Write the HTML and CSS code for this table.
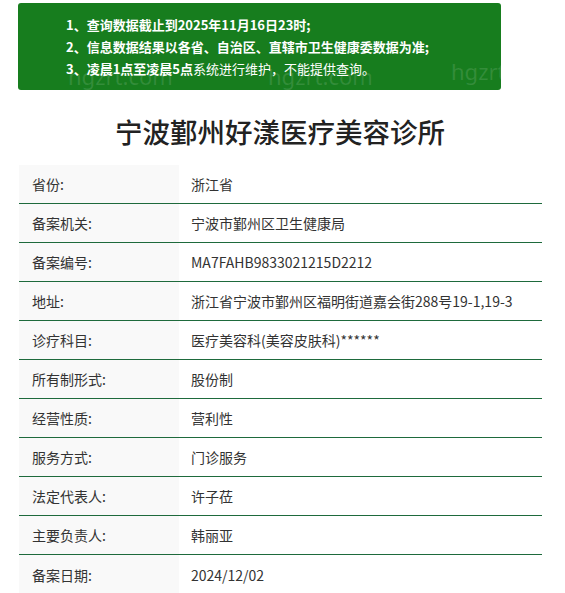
FILE: index.html
```html
<!DOCTYPE html>
<html lang="zh-CN">
<head>
<meta charset="utf-8">
<title>宁波鄞州好漾医疗美容诊所</title>
<link rel="stylesheet" href="styles.css">
</head>
<body>
<div class="page">
  <div class="notice">
    <p class="line b">1、查询数据截止到2025年11月16日23时;</p>
    <p class="line b">2、信息数据结果以各省、自治区、直辖市卫生健康委数据为准;</p>
    <p class="line"><b>3、凌晨1点至凌晨5点</b>系统进行维护，不能提供查询。</p>
    <span class="wm wm1">hgzrt.com</span>
    <span class="wm wm2">hgzrt.com</span>
    <span class="wm wm3">hgzrt.c</span>
  </div>
  <h1 class="title">宁波鄞州好漾医疗美容诊所</h1>
  <div class="table">
    <div class="row"><div class="k">省份:</div><div class="v">浙江省</div></div>
    <div class="row"><div class="k">备案机关:</div><div class="v">宁波市鄞州区卫生健康局</div></div>
    <div class="row"><div class="k">备案编号:</div><div class="v">MA7FAHB9833021215D2212</div></div>
    <div class="row"><div class="k">地址:</div><div class="v">浙江省宁波市鄞州区福明街道嘉会街288号19-1,19-3</div></div>
    <div class="row"><div class="k">诊疗科目:</div><div class="v">医疗美容科(美容皮肤科)******</div></div>
    <div class="row"><div class="k">所有制形式:</div><div class="v">股份制</div></div>
    <div class="row"><div class="k">经营性质:</div><div class="v">营利性</div></div>
    <div class="row"><div class="k">服务方式:</div><div class="v">门诊服务</div></div>
    <div class="row"><div class="k">法定代表人:</div><div class="v">许子莅</div></div>
    <div class="row"><div class="k">主要负责人:</div><div class="v">韩丽亚</div></div>
    <div class="row"><div class="k">备案日期:</div><div class="v">2024/12/02</div></div>
  </div>
</div>
</body>
</html>
```
FILE: styles.css
```css
* { box-sizing: border-box; }
html, body { margin: 0; padding: 0; background: #fff; }
body {
  font-family: "Noto Sans CJK SC", "Noto Sans", sans-serif;
  color: #333;
  overflow: hidden;
}
.page {
  width: 565px;
  padding: 3px 0 0 18px;
}
.notice {
  position: relative;
  overflow: hidden;
  width: 483px;
  height: 87px;
  background: #177d1e;
  border-radius: 3px;
  padding: 11px 0 0 48px;
  color: #fff;
}
.line {
  margin: 0;
  font-size: 13px;
  line-height: 22px;
  white-space: nowrap;
  position: relative;
  z-index: 1;
}
.line.b, .line b { font-weight: 700; }
.wm {
  position: absolute;
  font-family: "Noto Sans", sans-serif;
  font-size: 22px;
  line-height: 26px;
  color: rgba(255,255,255,0.12);
  white-space: nowrap;
}
.wm1 { left: 50px; top: 60px; }
.wm2 { left: 250px; top: 60px; }
.wm3 { left: 433px; top: 55px; }
.title {
  margin: 0;
  width: 524px;
  padding: 22px 0 15px;
  text-align: center;
  font-size: 27.5px;
  line-height: 38px;
  font-weight: 500;
  color: #222;
}
.table {
  margin-left: 1px;
  width: 523px;
}
.row {
  display: flex;
  height: 39px;
  border-bottom: 1px solid #1e6a3c;
  font-size: 14px;
}
.row:last-child { border-bottom: none; }
.k {
  width: 160px;
  flex: none;
  background: #f9f9f9;
  padding-left: 13px;
  display: flex;
  align-items: center;
}
.v {
  padding-left: 12px;
  display: flex;
  align-items: center;
  white-space: nowrap;
}
```
